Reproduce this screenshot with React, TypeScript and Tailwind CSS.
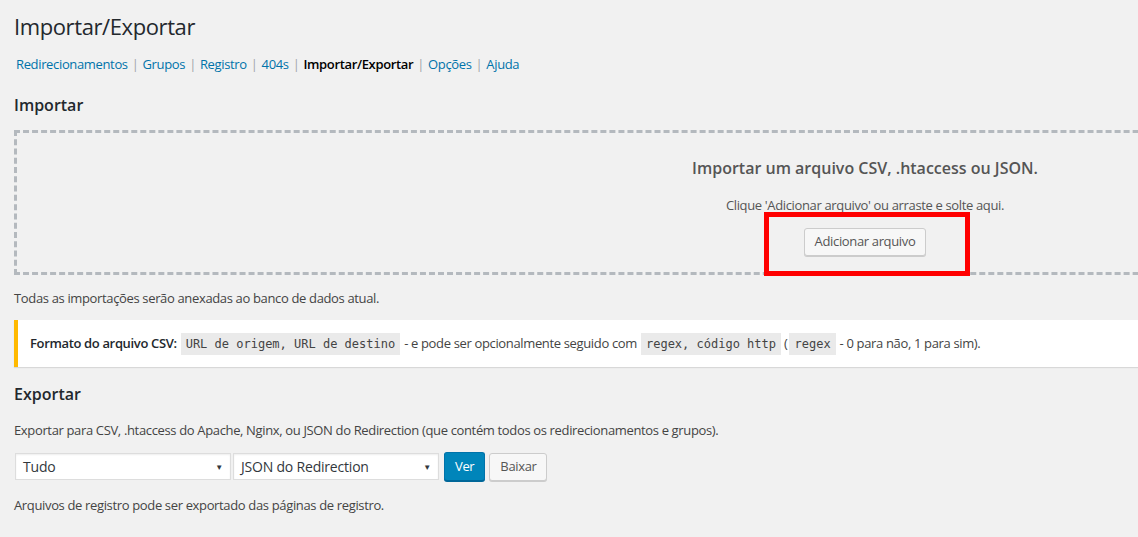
const navItems = ["Redirecionamentos", "Grupos", "Registro", "404s", "Importar/Exportar", "Opções", "Ajuda"];

function Select({ label, width }: { label: string; width: string }) {
  return (
    <div
      className={`${width} h-[27px] flex items-center justify-between bg-white border border-[#dddddd] shadow-[inset_0_1px_2px_rgba(0,0,0,0.07)] pl-[7px] pr-[7px] text-[14px] tracking-[-0.2px] text-[#32373c]`}
    >
      <span>{label}</span>
      <span className="text-[8px] text-[#32373c]">▼</span>
    </div>
  );
}

export default function App() {
  return (
    <div className="w-full h-[537px] overflow-hidden bg-[#f1f1f1] font-['Open_Sans',sans-serif] text-[13px] tracking-[-0.35px] text-[#444]">
      <div className="w-[1716px] pl-[14px] pt-[12px]">
        <h1 className="text-[22px] leading-[29px] font-normal tracking-[-0.4px] text-[#23282d]">Importar/Exportar</h1>

        <div className="mt-[14px] flex items-center text-[13px] leading-[18px] pl-[2px]">
          {navItems.map((item, i) => (
            <span key={item} className="flex items-center">
              {i > 0 && <span className="px-[4px] text-[#a0a5aa]">|</span>}
              <span className={item === "Importar/Exportar" ? "text-black font-semibold" : "text-[#0073aa]"}>{item}</span>
            </span>
          ))}
        </div>

        <h2 className="mt-[21px] text-[16px] leading-[22px] font-semibold tracking-normal text-[#23282d]">Importar</h2>

        <div className="mt-[14px] h-[145px] border-[3px] border-dashed border-[#b4b9be] flex flex-col items-center">
          <h3 className="mt-[24px] text-[16px] leading-[22px] font-semibold tracking-normal text-[#555]">Importar um arquivo CSV, .htaccess ou JSON.</h3>
          <p className="mt-[17px] leading-[18px] text-[#555]">Clique 'Adicionar arquivo' ou arraste e solte aqui.</p>
          <div className="relative mt-[14px]">
            <button className="h-[28px] px-[10px] bg-[#f7f7f7] border border-[#cccccc] rounded-[3px] shadow-[0_1px_0_#cccccc] text-[13px] text-[#555]">
              Adicionar arquivo
            </button>
            <div className="absolute left-[-40px] top-[-16px] w-[206px] h-[64px] border-[5px] border-[#ff0000]" />
          </div>
        </div>

        <p className="mt-[14px] leading-[18px]">Todas as importações serão anexadas ao banco de dados atual.</p>

        <div className="mt-[13px] h-[47px] bg-white border-l-4 border-[#ffb900] shadow-[0_1px_1px_rgba(0,0,0,0.1)] flex items-center pl-[12px]">
          <span className="font-semibold text-[#23282d]">Formato do arquivo CSV:</span>
          <code className="ml-[4px] bg-[#eaeaea] px-[5px] py-[2px] font-['DejaVu_Sans_Mono',monospace] text-[12px] tracking-normal text-[#444]">URL de origem, URL de destino</code>
          <span className="ml-[4px]">- e pode ser opcionalmente seguido com</span>
          <code className="ml-[4px] bg-[#eaeaea] px-[5px] py-[2px] font-['DejaVu_Sans_Mono',monospace] text-[12px] tracking-normal text-[#444]">regex, código http</code>
          <span className="ml-[3px]">(</span>
          <code className="ml-[2px] bg-[#eaeaea] px-[5px] py-[2px] font-['DejaVu_Sans_Mono',monospace] text-[12px] tracking-normal text-[#444]">regex</code>
          <span className="ml-[4px]">- 0 para não, 1 para sim).</span>
        </div>

        <h2 className="mt-[16px] text-[16px] leading-[22px] font-semibold tracking-normal text-[#23282d]">Exportar</h2>

        <p className="mt-[16px] leading-[18px]">
          Exportar para CSV, .htaccess do Apache, Nginx, ou JSON do Redirection (que contém todos os redirecionamentos e grupos).
        </p>

        <div className="mt-[13px] flex items-center pl-[1px]">
          <Select label="Tudo" width="w-[216px]" />
          <div className="ml-[2px]">
            <Select label="JSON do Redirection" width="w-[206px]" />
          </div>
          <button className="ml-[5px] h-[29px] px-[10px] bg-[#0085ba] border border-[#0073aa] border-b-[#006799] rounded-[3px] shadow-[0_1px_0_#006799] text-[13px] text-white">
            Ver
          </button>
          <button className="ml-[4px] h-[28px] px-[10px] bg-[#f7f7f7] border border-[#cccccc] rounded-[3px] shadow-[0_1px_0_#cccccc] text-[13px] text-[#555]">
            Baixar
          </button>
        </div>

        <p className="mt-[15px] leading-[18px]">Arquivos de registro pode ser exportado das páginas de registro.</p>
      </div>
    </div>
  );
}
